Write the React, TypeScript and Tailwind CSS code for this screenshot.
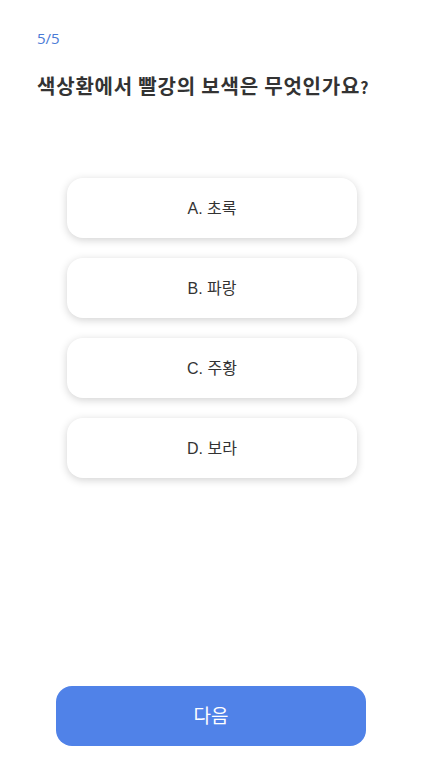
const options = ["A. 초록", "B. 파랑", "C. 주황", "D. 보라"];

export default function App() {
  return (
    <div
      className="flex h-[776px] w-[428px] flex-col bg-white"
      style={{ fontFamily: '"Liberation Sans", "Noto Sans CJK KR", sans-serif' }}
    >
      <div className="px-[37px] pt-[28px]">
        <div className="font-['Open_Sans'] text-[15px] leading-[20px] text-[#4a7bd6]">5/5</div>
        <h1 className="mt-[24px] font-['Noto_Sans_CJK_KR'] text-[20px] font-bold leading-[28px] tracking-[0.8px] text-[#333]">
          색상환에서 빨강의 보색은 무엇인가요<span className="text-[16px]">?</span>
        </h1>
      </div>

      <div className="mt-[77px] flex flex-col items-center gap-[20px] pr-[4px]">
        {options.map((o) => (
          <button
            key={o}
            className="h-[60px] w-[290px] rounded-[16px] bg-white pt-[2px] text-[16px] text-[#333] shadow-[0_2px_8px_rgba(0,0,0,0.18)]"
          >
            {o}
          </button>
        ))}
      </div>

      <div className="mt-auto flex justify-center pb-[30px] pr-[6px]">
        <button className="h-[60px] w-[310px] rounded-[16px] bg-[#5082e8] pt-[2px] text-[19px] text-white">
          다음
        </button>
      </div>
    </div>
  );
}
